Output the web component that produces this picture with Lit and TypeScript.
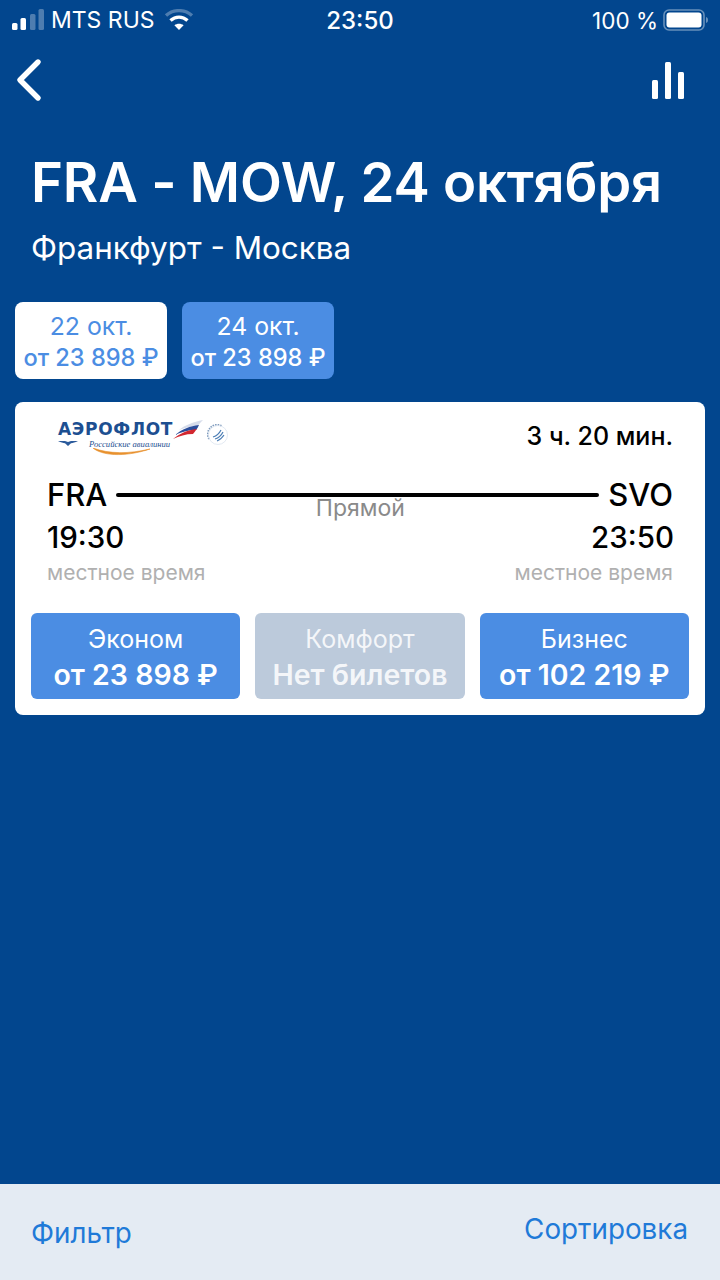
import { LitElement, html, css, svg } from 'lit';
import { customElement } from 'lit/decorators.js';

const dates = [
  { day: '22 окт.', price: 'от 23 898 ₽', active: true },
  { day: '24 окт.', price: 'от 23 898 ₽', active: false },
];

const fares = [
  { name: 'Эконом', price: 'от 23 898 ₽', off: false },
  { name: 'Комфорт', price: 'Нет билетов', off: true },
  { name: 'Бизнес', price: 'от 102 219 ₽', off: false },
];

const signal = svg`<svg width="33" height="22" viewBox="0 0 33 22">
  <rect x="0" y="14" width="5.500" height="7" rx="1.500" fill="#fff"/>
  <rect x="8.500" y="9" width="5.500" height="12" rx="1.500" fill="#fff"/>
  <rect x="18" y="5" width="5.500" height="16" rx="1.500" fill="#fff" opacity=".3"/>
  <rect x="26.500" y="0" width="5.500" height="21" rx="1.500" fill="#fff" opacity=".3"/>
</svg>`;

const wifi = svg`<svg class="wifi" width="30" height="22" viewBox="0 0 30 22" fill="none" stroke="#fff" stroke-width="3.400">
  <path d="M2 6.500C9.500 0 20.500 0 28 6.500" opacity=".3"/>
  <path d="M6.500 11.500C11.500 7 18.500 7 23.500 11.500"/>
  <path d="M15 21l-4.600-4.800c2.600-2 6.600-2 9.200 0z" fill="#fff" stroke="none"/>
</svg>`;

const battery = svg`<svg width="45" height="22" viewBox="0 0 45 22">
  <rect x="1" y="1" width="40" height="20" rx="5" fill="none" stroke="#fff" stroke-opacity=".4" stroke-width="1.600"/>
  <rect x="3.500" y="3.500" width="35" height="15" rx="3" fill="#fff"/>
  <path d="M43 8c1.500.4 2 1.500 2 3s-.5 2.600-2 3z" fill="#fff" opacity=".4"/>
</svg>`;

const back = svg`<svg width="26" height="44" viewBox="0 0 26 44" fill="none" stroke="#fff" stroke-width="5.400" stroke-linecap="round" stroke-linejoin="round">
  <path d="M22 4L4 22 22 40"/>
</svg>`;

const chart = svg`<svg width="32" height="37" viewBox="0 0 32 37" fill="#fff">
  <rect x="0" y="18" width="6" height="19" rx="1.500"/>
  <rect x="13" y="0" width="6" height="37" rx="1.500"/>
  <rect x="26" y="10" width="6" height="27" rx="1.500"/>
</svg>`;

const flag = svg`<svg class="flag" width="30" height="19" viewBox="0 0 30 19">
  <path d="M6 10C12 5 20 2 30 0 28 2 26 4 25 6 18 6 12 8 6 10z" fill="#d6dcea"/>
  <path d="M2 15C9 9 17 6 26 5 25 7 24 9 23 10 15 10 8 12 2 15z" fill="#2b4d9b"/>
  <path d="M0 19C6 14 14 10 24 9 22 11 21 13 20 14 13 14 6 16 0 19z" fill="#d2272f"/>
</svg>`;

const arc = svg`<svg class="arc" width="57" height="9" viewBox="0 0 57 9">
  <path d="M0 0C8 7 30 10 57 1 36 6 16 6 0 0z" fill="#e8912d" stroke="#e8912d" stroke-width=".6"/>
</svg>`;

const wings = svg`<svg class="wings" width="20" height="6" viewBox="0 0 20 6" fill="#2b5a9b">
  <path d="M0 1h7l3 1 3-1h7c-3 1.500-5 2-7 2.200L10 6 7 3.200C5 3 3 2.500 0 1z"/>
</svg>`;

const team = svg`<svg class="team" width="22" height="22" viewBox="0 0 22 22" fill="none">
  <path d="M2 15A9.500 9.500 0 0 1 15 2" stroke="#7f9bbd" stroke-width="1.600" stroke-dasharray="1.500 1"/>
  <circle cx="11" cy="11" r="9.500" stroke="#d5e0ec" stroke-width=".7"/>
  <path d="M6 13c3-1 6-3 8-7M8 15c3-1 6-3 8-7M10 17c3-1 5-3 7-6" stroke="#4b7db5" stroke-width="1.200"/>
</svg>`;

@customElement('app-root')
export class AppRoot extends LitElement {
  static styles = css`
    :host {
      display: flex;
      flex-direction: column;
      height: 1280px;
      background: #02468e;
      color: #fff;
      font-family: Inter, "Noto Sans", sans-serif;
    }
    .status {
      display: flex;
      align-items: center;
      justify-content: space-between;
      height: 40px;
      padding: 0 12px;
      font-size: 23px;
    }
    .status-side {
      flex: 1;
      display: flex;
      align-items: center;
      gap: 6px;
    }
    .status-side.end {
      justify-content: flex-end;
      gap: 5px;
      font-size: 22.500px;
    }
    .status-side svg {
      display: block;
    }
    .wifi {
      margin-left: 3px;
    }
    .clock {
      font-size: 24px;
      font-weight: 500;
    }
    .nav {
      display: flex;
      justify-content: space-between;
      align-items: center;
      height: 80px;
      padding: 0 36px 0 16px;
    }
    .nav svg {
      display: block;
    }
    .head {
      padding: 30px 31px 0;
    }
    h1 {
      margin: 0;
      font-size: 54.500px;
      line-height: 64px;
      font-weight: 600;
      letter-spacing: -0.2px;
      white-space: nowrap;
    }
    .sub {
      margin-top: 16px;
      font-size: 31.400px;
      line-height: 36px;
    }
    .dates {
      display: flex;
      gap: 15px;
      padding: 36px 15px 0;
    }
    .date {
      width: 152px;
      height: 77px;
      box-sizing: border-box;
      padding-top: 2px;
      border-radius: 8px;
      background: #4b8de3;
      display: flex;
      flex-direction: column;
      align-items: center;
      justify-content: center;
      font-size: 24.800px;
      line-height: 31px;
    }
    .date.active {
      background: #fff;
      color: #4b8de3;
    }
    .date b {
      font-size: 23.600px;
      font-weight: 500;
    }
    .card {
      margin: 23px 15px 0;
      height: 313px;
      box-sizing: border-box;
      background: #fff;
      border-radius: 8px;
      color: #000;
      padding: 0 16px 16px;
      display: flex;
      flex-direction: column;
    }
    .top {
      display: flex;
      justify-content: space-between;
      padding: 16px 16px 0 0;
      height: 58px;
      box-sizing: border-box;
    }
    .logo {
      position: relative;
      width: 200px;
      height: 58px;
      margin-top: -16px;
    }
    .logo-name {
      position: absolute;
      left: 27px;
      top: 17px;
      font-family: "DejaVu Sans", sans-serif;
      font-size: 17px;
      line-height: 20px;
      font-weight: 700;
      letter-spacing: 0.7px;
      color: #1d4f91;
      white-space: nowrap;
    }
    .logo-sub {
      position: absolute;
      left: 58px;
      top: 37px;
      font-family: "Liberation Serif", serif;
      font-style: italic;
      font-size: 8.600px;
      line-height: 10px;
      color: #1d4f91;
      white-space: nowrap;
    }
    .flag {
      position: absolute;
      left: 142px;
      top: 18px;
    }
    .arc {
      position: absolute;
      left: 62px;
      top: 46px;
    }
    .wings {
      position: absolute;
      left: 27px;
      top: 38px;
    }
    .team {
      position: absolute;
      left: 176px;
      top: 22px;
    }
    .duration {
      font-size: 25px;
      line-height: 36px;
      font-weight: 500;
    }
    .route {
      display: grid;
      grid-template-columns: auto 1fr auto;
      column-gap: 9px;
      padding: 17px 16px 0;
      align-items: center;
      font-size: 31px;
      line-height: 36px;
      font-weight: 500;
    }
    .line {
      position: relative;
      height: 4px;
      margin-top: -1px;
      background: #000;
      border-radius: 2px;
    }
    .direct {
      position: absolute;
      left: 5px;
      right: 0;
      top: 1px;
      text-align: center;
      font-size: 23px;
      line-height: 28px;
      font-weight: 400;
      color: #8a8a8a;
    }
    .times {
      display: flex;
      justify-content: space-between;
      padding: 6px 15px 0 16px;
      font-size: 29.500px;
      line-height: 36px;
      font-weight: 500;
    }
    .local {
      display: flex;
      justify-content: space-between;
      padding: 4px 16px 0;
      font-size: 21px;
      line-height: 28px;
      color: #b0b0b0;
    }
    .fares {
      margin-top: auto;
      display: grid;
      grid-template-columns: repeat(3, 1fr);
      gap: 15px;
    }
    .fare {
      height: 86px;
      box-sizing: border-box;
      padding-top: 2px;
      border-radius: 6px;
      background: #4b8de3;
      color: #fff;
      display: flex;
      flex-direction: column;
      align-items: center;
      justify-content: center;
    }
    .fare.off {
      background: #bccadb;
      color: rgba(255, 255, 255, 0.85);
    }
    .fare-name {
      font-size: 25px;
      line-height: 35px;
    }
    .fare-price {
      font-size: 28.500px;
      line-height: 36px;
      font-weight: 600;
      white-space: nowrap;
    }
    .spacer {
      flex: 1;
    }
    .bottom {
      height: 96px;
      background: #e4ebf3;
      display: flex;
      justify-content: space-between;
      padding: 0 32px 0 31px;
      color: #1f7ad8;
      font-size: 27.800px;
    }
    .bottom span:first-child {
      margin-top: 32px;
    }
    .bottom span:last-child {
      margin-top: 28px;
    }
  `;

  render() {
    return html`
      <div class="status">
        <div class="status-side">${signal}<span>MTS RUS</span>${wifi}</div>
        <div class="clock">23:50</div>
        <div class="status-side end"><span>100 %</span>${battery}</div>
      </div>
      <div class="nav">${back}${chart}</div>
      <div class="head">
        <h1>FRA - MOW, 24 октября</h1>
        <div class="sub">Франкфурт - Москва</div>
      </div>
      <div class="dates">
        ${dates.map(d => html`
          <div class="date ${d.active ? 'active' : ''}">
            <span>${d.day}</span>
            <b>${d.price}</b>
          </div>
        `)}
      </div>
      <div class="card">
        <div class="top">
          <div class="logo">
            <span class="logo-name">АЭРОФЛОТ</span>
            <span class="logo-sub">Российские авиалинии</span>
            ${flag}${arc}${wings}${team}
          </div>
          <div class="duration">3 ч. 20 мин.</div>
        </div>
        <div class="route">
          <span>FRA</span>
          <div class="line"><div class="direct">Прямой</div></div>
          <span>SVO</span>
        </div>
        <div class="times"><span>19:30</span><span>23:50</span></div>
        <div class="local"><span>местное время</span><span>местное время</span></div>
        <div class="fares">
          ${fares.map(f => html`
            <div class="fare ${f.off ? 'off' : ''}">
              <span class="fare-name">${f.name}</span>
              <span class="fare-price">${f.price}</span>
            </div>
          `)}
        </div>
      </div>
      <div class="spacer"></div>
      <div class="bottom"><span>Фильтр</span><span>Сортировка</span></div>
    `;
  }
}
